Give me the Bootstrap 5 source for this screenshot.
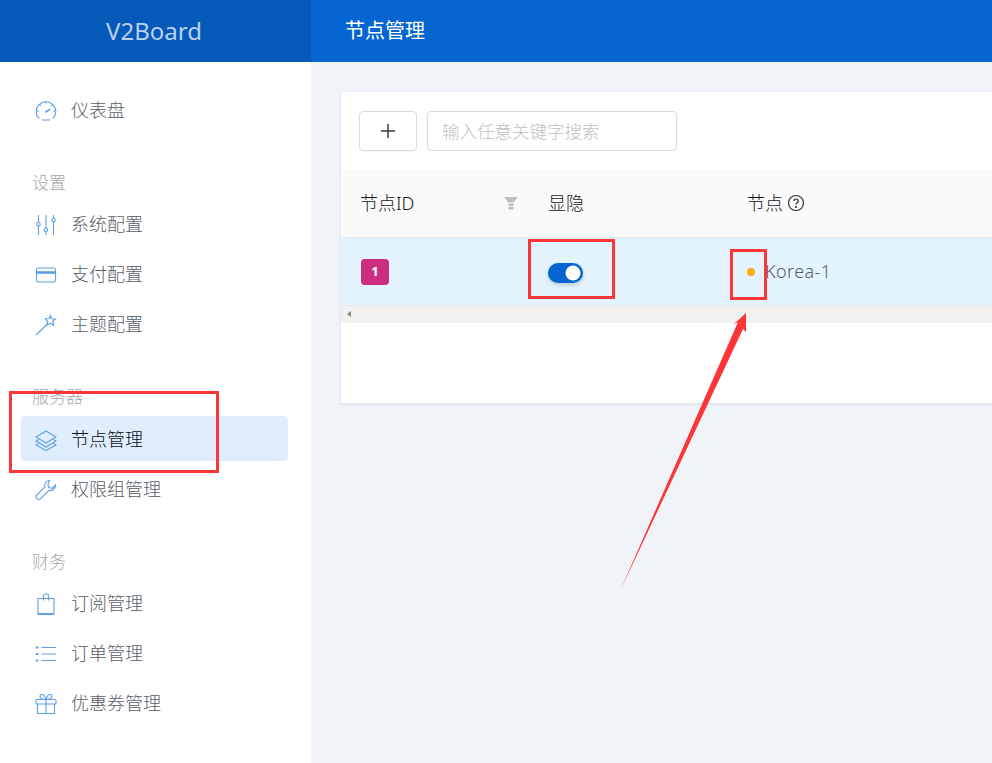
<!DOCTYPE html>
<html lang="zh-CN">
<head>
<meta charset="utf-8">
<title>V2Board</title>
<link href="https://cdn.jsdelivr.net/npm/bootstrap@5.3.0/dist/css/bootstrap.min.css" rel="stylesheet">
<style>
html,body{height:100%;overflow:hidden}
body{font-family:"Noto Sans","Noto Sans CJK SC",sans-serif;font-weight:300;font-size:18px;background:#f0f3f8;color:#575d66;position:relative}
.shell{height:763px}
.side-col{width:311px;flex:none;background:#fff;height:763px}
.brand-bar{height:62px;background:#0559b8;color:#b9d0ec;font-size:24px;font-weight:400;padding-right:3px}
.side-menu{padding:26px 23px 0 21px}
.side-item{height:45px;margin-bottom:5px;padding:0 14px;border-radius:4px;color:#575d66;gap:14px;text-decoration:none}
.side-item svg{width:22px;height:22px;flex:none;stroke:#5f9fe8;fill:none;stroke-width:1.1}
.side-item.is-on{background:#dfedfd;color:#0b0f14;margin-bottom:6px;padding-top:2px}
.side-head{height:64px;padding:0 0 9px 11px;font-size:17px;color:#a4a8ad;display:flex;align-items:flex-end;line-height:20px}
.main-col{flex:1;min-width:0}
.top-bar{height:62px;background:#0665d0;color:#fff;font-size:20px;font-weight:400;padding-left:34px}
.main-body{padding:30px 0 0 30px}
.node-panel{height:311px;background:#fff;box-shadow:0 1px 3px rgba(60,80,120,.15)}
.tool-row{padding:19px 18px;height:78px;gap:10px}
.add-btn{width:58px;height:40px;padding:0;border:1px solid #d9d9d9;border-radius:4px;box-shadow:0 2px 0 rgba(0,0,0,.015);background:#fff;color:#444}
.add-btn svg{width:16px;height:16px;stroke:#3c3c3c;stroke-width:1.5}
.search-box{width:250px;height:40px;border-radius:4px;border:1px solid #d9d9d9;padding:0 14px;font-size:17.5px;font-weight:300}
.search-box::placeholder{color:#bfbfbf}
.node-table{table-layout:fixed;width:100%;margin:0}
.node-table th,.node-table td{height:68px;padding:0 20px;vertical-align:middle;box-shadow:none;border-bottom:1px solid #e8e8e8}
.node-table th{background:#fafafa;color:#15181c;font-weight:300;font-size:18px;height:67px}
.node-table th:first-child{padding:0 10px 0 19px}
.node-table td{background:#e3f4fe;color:#575d66}
.id-chip{width:28px;height:26px;margin-top:2px;background:#cb2e80;border-radius:4px;font-size:13px;font-weight:700;color:#fff}
.switch-wrap{padding:4px 0 0}
.form-switch .state-switch{width:35px;height:20px;margin:0;float:none;background-color:#0665d0;border:0;display:block;box-shadow:0 2px 4px rgba(0,35,11,.2)}
.status-dot{width:8px;height:8px;margin-top:2px;border-radius:50%;background:#faad14;margin-right:10px;flex:none}
.server-name{letter-spacing:.4px}
.filter-mark{width:14px;height:14px;fill:#bfbfbf;flex:none}
.help-mark{width:18px;height:18px;margin-left:4px;fill:none;stroke:#272b30;stroke-width:1.2}
.h-scroll{height:17px;background:#f1f1f1;padding-left:6px}
.h-scroll i{width:0;height:0;border:3.5px solid transparent;border-right:4px solid #8a8a8a;border-left:0;display:block}
.mark-box{position:absolute;border:3px solid #fc3537}
.mark-a{left:9px;top:391px;width:210px;height:82px}
.mark-b{left:528px;top:239px;width:87px;height:60px}
.mark-c{left:730px;top:249px;width:37px;height:51px}
.mark-arrow{position:absolute;left:0;top:0;width:992px;height:763px;pointer-events:none}
</style>
</head>
<body>
<div class="shell d-flex">
  <aside class="side-col">
    <div class="brand-bar d-flex align-items-center justify-content-center">V2Board</div>
    <nav class="side-menu nav flex-column">
      <a class="side-item d-flex align-items-center" href="#"><svg viewBox="0 0 22 22"><path d="M4.200 18.600A9.800 9.800 0 1 1 17.800 18.600"/><path d="M7 20h8M11 1.500v2M2 11h2M18 11h2M4.500 4.500l1.300 1.300M17.500 4.500l-1.300 1.300"/><path d="M10.200 12.200l5-3" stroke-width="1.800"/></svg><span>仪表盘</span></a>
      <div class="side-head">设置</div>
      <a class="side-item d-flex align-items-center" href="#"><svg viewBox="0 0 22 22"><path d="M3.500 1v7.500M3.500 12v9M11 1v13M11 17.500v3.500M18.500 1v3.500M18.500 8v13"/><circle cx="3.500" cy="10.200" r="1.700"/><circle cx="11" cy="15.700" r="1.700"/><circle cx="18.500" cy="6.200" r="1.700"/></svg><span>系统配置</span></a>
      <a class="side-item d-flex align-items-center" href="#"><svg viewBox="0 0 22 22"><rect x="1.500" y="4" width="19" height="14" rx="1.800"/><path d="M1.500 8.500h19" stroke-width="2.600"/></svg><span>支付配置</span></a>
      <a class="side-item d-flex align-items-center" href="#"><svg viewBox="0 0 22 22"><path d="M1 21L13 9.500"/><path d="M15.500 1.500l.8 3.300 4.200.2-2.900 2.500 1 3.800-3.300-2-3.300 1.600.7-3.500-2.400-2.500 3.700-.4z"/></svg><span>主题配置</span></a>
      <div class="side-head">服务器</div>
      <a class="side-item is-on d-flex align-items-center" href="#"><svg viewBox="0 0 22 22"><path d="M11 2L21 8l-10 6L1 8z"/><path d="M3.500 10.500L1 12l10 6 10-6-2.500-1.500"/><path d="M3.500 14.500L1 16l10 5.500L21 16l-2.500-1.500"/></svg><span>节点管理</span></a>
      <a class="side-item d-flex align-items-center" href="#"><svg viewBox="0 0 22 22"><path d="M14.500 1.500c-3.300.2-5.500 3-4.500 6.300L1.800 16c-1.200 1.200-.8 2.800 0 3.700.9 1 2.700 1.300 3.900 0l8.200-8.300c3.500 1 6.800-1.600 6.600-5.400l-3.500 3.300-3.300-.8-.8-3.200z"/></svg><span>权限组管理</span></a>
      <div class="side-head">财务</div>
      <a class="side-item d-flex align-items-center" href="#"><svg viewBox="0 0 22 22"><path d="M3 5.500h16V21H3z"/><path d="M3 21h16" stroke-width="2"/><path d="M8.500 7.500V3C8.500 1.800 9.200 1 10 1h2c.8 0 1.500.8 1.500 2v4.500"/></svg><span>订阅管理</span></a>
      <a class="side-item d-flex align-items-center" href="#"><svg viewBox="0 0 22 22"><path d="M6.500 4.500H21M6.500 11H21M6.500 17.500H21"/><path d="M1 4.500h2.400M1 11h2.400M1 17.500h2.400" stroke-width="2.200"/></svg><span>订单管理</span></a>
      <a class="side-item d-flex align-items-center" href="#"><svg viewBox="0 0 22 22"><rect x="1" y="6.500" width="20" height="4.500" rx="1"/><path d="M2.500 11v9.500h17V11M11 6.500v14"/><path d="M11 6.500C8 6.500 5 5.500 5 3.300 5 1.500 7.500.8 9 2.300c1 1 2 4.200 2 4.200s1-3.200 2-4.200c1.500-1.500 4-.8 4 1 0 2.200-3 3.200-6 3.200z"/></svg><span>优惠券管理</span></a>
    </nav>
  </aside>
  <main class="main-col">
    <div class="top-bar d-flex align-items-center">节点管理</div>
    <div class="main-body">
      <section class="node-panel">
        <div class="tool-row d-flex align-items-start">
          <button class="btn add-btn d-flex align-items-center justify-content-center" type="button" aria-label="添加"><svg viewBox="0 0 16 16" fill="none"><path d="M8 1v14M1 8h14"/></svg></button>
          <input class="form-control search-box" type="text" placeholder="输入任意关键字搜索">
        </div>
        <table class="table node-table">
          <colgroup><col style="width:187px"><col style="width:199px"><col></colgroup>
          <thead>
            <tr>
              <th><div class="d-flex align-items-center justify-content-between">节点ID<svg class="filter-mark" viewBox="0 0 14 14"><path d="M0 1h14l-4.500 5.500H4.500z"/><rect x="4.500" y="7.500" width="5" height="2.500"/><rect x="4.500" y="11" width="5" height="2.500"/></svg></div></th>
              <th>显隐</th>
              <th><div class="d-flex align-items-center">节点<svg class="help-mark" viewBox="0 0 18 18"><circle cx="9" cy="9" r="7.500"/><path d="M6.800 7.100c0-1.300 1-2.100 2.200-2.100s2.200.8 2.200 2c0 1.800-2.200 1.700-2.200 3.600"/><circle cx="9" cy="13" r=".5"/></svg></div></th>
            </tr>
          </thead>
          <tbody>
            <tr>
              <td><span class="id-chip d-flex align-items-center justify-content-center">1</span></td>
              <td><div class="form-check form-switch m-0 switch-wrap"><input class="form-check-input state-switch" type="checkbox" role="switch" checked aria-label="显隐"></div></td>
              <td><div class="d-flex align-items-center"><span class="status-dot"></span><span class="server-name">Korea-1</span></div></td>
            </tr>
          </tbody>
        </table>
        <div class="h-scroll d-flex align-items-center"><i></i></div>
      </section>
    </div>
  </main>
</div>
<div class="mark-box mark-a"></div>
<div class="mark-box mark-b"></div>
<div class="mark-box mark-c"></div>
<svg class="mark-arrow" viewBox="0 0 992 763"><polygon fill="#fc3537" points="746,313 746,332 743,329 620.500,590 738,322 733,325"/></svg>
</body>
</html>
